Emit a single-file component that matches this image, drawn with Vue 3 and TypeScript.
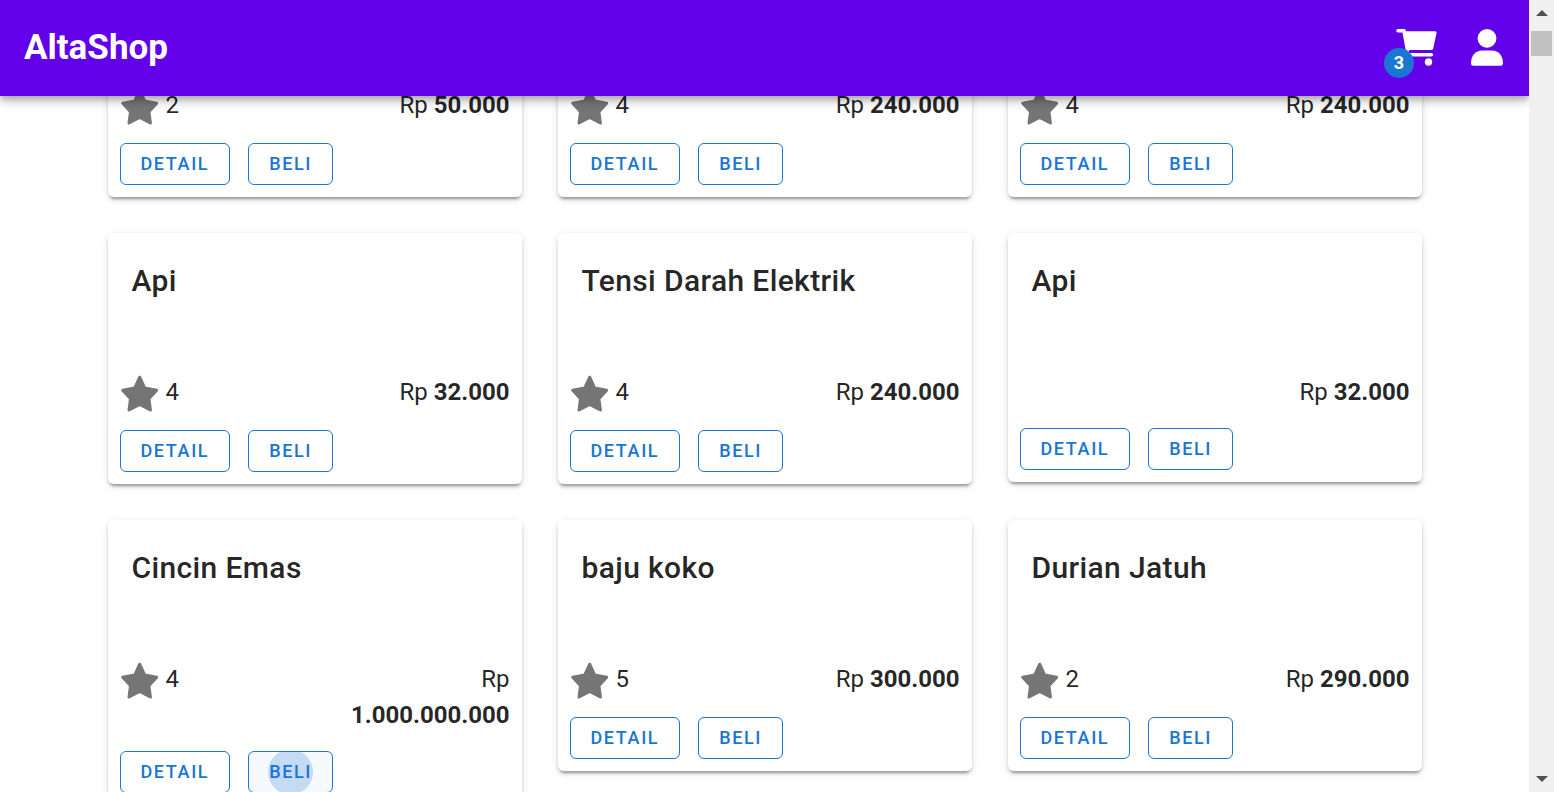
<script setup lang="ts">
interface Product {
  id: number
  name?: string
  rating: number | null
  price: string
  pressed?: boolean
}

const cartCount = 3

const products: Product[] = [
  { id: 1, rating: 2, price: '50.000' },
  { id: 2, rating: 4, price: '240.000' },
  { id: 3, rating: 4, price: '240.000' },
  { id: 4, name: 'Api', rating: 4, price: '32.000' },
  { id: 5, name: 'Tensi Darah Elektrik', rating: 4, price: '240.000' },
  { id: 6, name: 'Api', rating: null, price: '32.000' },
  { id: 7, name: 'Cincin Emas', rating: 4, price: '1.000.000.000', pressed: true },
  { id: 8, name: 'baju koko', rating: 5, price: '300.000' },
  { id: 9, name: 'Durian Jatuh', rating: 2, price: '290.000' },
]
</script>

<template>
  <div class="shell">
    <div class="page">
      <header class="app-bar">
        <a class="brand" href="#">AltaShop</a>
        <nav class="actions">
          <button class="icon-btn" type="button" aria-label="Cart">
            <svg width="42" height="40" viewBox="0 0 42 40" aria-hidden="true">
              <path d="M2 2.8H8L12.3 26.8H35.3" fill="none" stroke="#fff" stroke-width="3.6" stroke-linecap="round" stroke-linejoin="round" />
              <path d="M8 3.3H39.2Q40.9 3.5 40.5 5.2L37.2 20.5Q36.8 22 35.2 22H11Z" fill="#fff" />
              <path d="M12.8 23.6H37" stroke="#6200ea" stroke-width="2.6" />
              <circle cx="13" cy="34" r="3.7" fill="#fff" />
              <circle cx="32.5" cy="34" r="3.7" fill="#fff" />
            </svg>
            <span class="badge">{{ cartCount }}</span>
          </button>
          <button class="icon-btn" type="button" aria-label="Account">
            <svg width="35" height="40" viewBox="0 0 35 40" aria-hidden="true">
              <circle cx="17" cy="10.3" r="9.4" fill="#fff" />
              <path d="M1 35.5C1 27.5 5.5 22.6 12 22.6H22C28.5 22.6 33 27.5 33 35.5Q33 37.8 30.8 37.8H3.2Q1 37.8 1 35.5Z" fill="#fff" />
            </svg>
          </button>
        </nav>
      </header>

      <main class="catalog">
        <article v-for="p in products" :key="p.id" class="card">
          <h2 v-if="p.name" class="card-title">{{ p.name }}</h2>
          <div class="meta">
            <div v-if="p.rating !== null" class="rating">
              <svg width="38" height="38" viewBox="0 0 38 38" aria-hidden="true">
                <path d="M19.7 3.2L24.6 13.9L36.7 16.3L28.9 24.6L30.4 36L19.7 30.4L9 36L10.5 24.6L2.7 16.3L14.8 13.9Z" fill="#757575" stroke="#757575" stroke-width="3" stroke-linejoin="round" />
              </svg>
              <span>{{ p.rating }}</span>
            </div>
            <p class="price">Rp <strong>{{ p.price }}</strong></p>
          </div>
          <div class="card-actions">
            <button class="btn" type="button">DETAIL</button>
            <button class="btn" :class="{ pressed: p.pressed }" type="button">BELI</button>
          </div>
        </article>
      </main>
    </div>

    <div class="scrollbar" aria-hidden="true">
      <svg width="12" height="6" viewBox="0 0 12 6"><path d="M6 0L12 6H0Z" fill="#505050" /></svg>
      <div class="track"><div class="thumb"></div></div>
      <svg width="12" height="6" viewBox="0 0 12 6"><path d="M0 0H12L6 6Z" fill="#505050" /></svg>
    </div>
  </div>
</template>

<style>
body {
  margin: 0;
  overflow: hidden;
}
</style>

<style scoped>
.shell {
  display: flex;
  height: 100vh;
  overflow: hidden;
  background: #fff;
  color: rgba(0, 0, 0, 0.87);
  font-family: Roboto, "Liberation Sans", sans-serif;
}

.page {
  flex: 1;
  min-width: 0;
  overflow: hidden;
}

.app-bar {
  position: relative;
  z-index: 2;
  box-sizing: border-box;
  display: flex;
  align-items: center;
  justify-content: space-between;
  height: 96px;
  padding: 0 24px;
  background: #6200ea;
  box-shadow: 0 3px 6px -1px rgba(0, 0, 0, 0.2), 0 6px 8px rgba(0, 0, 0, 0.14),
    0 2px 15px rgba(0, 0, 0, 0.12);
}

.brand {
  color: #fff;
  font-size: 35px;
  font-weight: 700;
  line-height: 48px;
  text-decoration: none;
}

.actions {
  display: flex;
  gap: 32px;
}

.icon-btn {
  position: relative;
  display: flex;
  padding: 0;
  border: 0;
  background: none;
  color: #fff;
  cursor: pointer;
}

.badge {
  position: absolute;
  left: -12px;
  bottom: -10px;
  width: 30px;
  height: 30px;
  border-radius: 50%;
  background: #1976d2;
  font: 700 18px/30px Roboto, "Liberation Sans", sans-serif;
  text-align: center;
}

/* The top row of cards slides under the bar. */
.catalog {
  display: grid;
  grid-template-columns: repeat(3, minmax(0, 1fr));
  align-items: start;
  gap: 36px;
  box-sizing: border-box;
  max-width: 1350px;
  margin: -9px auto 0;
  padding: 0 18px;
}

.card {
  border-radius: 6px;
  background: #fff;
  box-shadow: 0 5px 2px -3px rgba(0, 0, 0, 0.2), 0 3px 3px rgba(0, 0, 0, 0.14),
    0 2px 8px rgba(0, 0, 0, 0.12);
}

.card-title {
  box-sizing: border-box;
  min-height: 141px;
  margin: 0;
  padding: 24px;
  font-size: 30px;
  font-weight: 500;
  line-height: 48px;
  letter-spacing: 0.0125em;
}

.meta {
  display: flex;
  justify-content: space-between;
  padding: 0 12px;
  font-size: 24px;
  line-height: 36px;
}

.rating {
  display: flex;
  gap: 8px;
}

.price {
  max-width: 180px;
  margin: 0 0 0 auto;
  text-align: right;
}

.card-actions {
  display: flex;
  gap: 18px;
  padding: 18px 12px 12px;
}

.btn {
  height: 42px;
  padding: 0 20px;
  border: 1px solid #1976d2;
  border-radius: 6px;
  background: #fff;
  color: #1976d2;
  font: 500 18px/40px Roboto, "Liberation Sans", sans-serif;
  letter-spacing: 0.09em;
  cursor: pointer;
}

.btn.pressed {
  background: radial-gradient(circle, #c4dbf3 22px, #f6f9fd 23px);
}

.scrollbar {
  box-sizing: border-box;
  display: flex;
  flex-direction: column;
  align-items: center;
  justify-content: space-between;
  width: 25px;
  padding: 10px 0;
  background: #f0f0f0;
}

.track {
  flex: 1;
  padding-top: 15px;
}

.thumb {
  width: 21px;
  height: 25px;
  background: #c1c1c1;
}
</style>
